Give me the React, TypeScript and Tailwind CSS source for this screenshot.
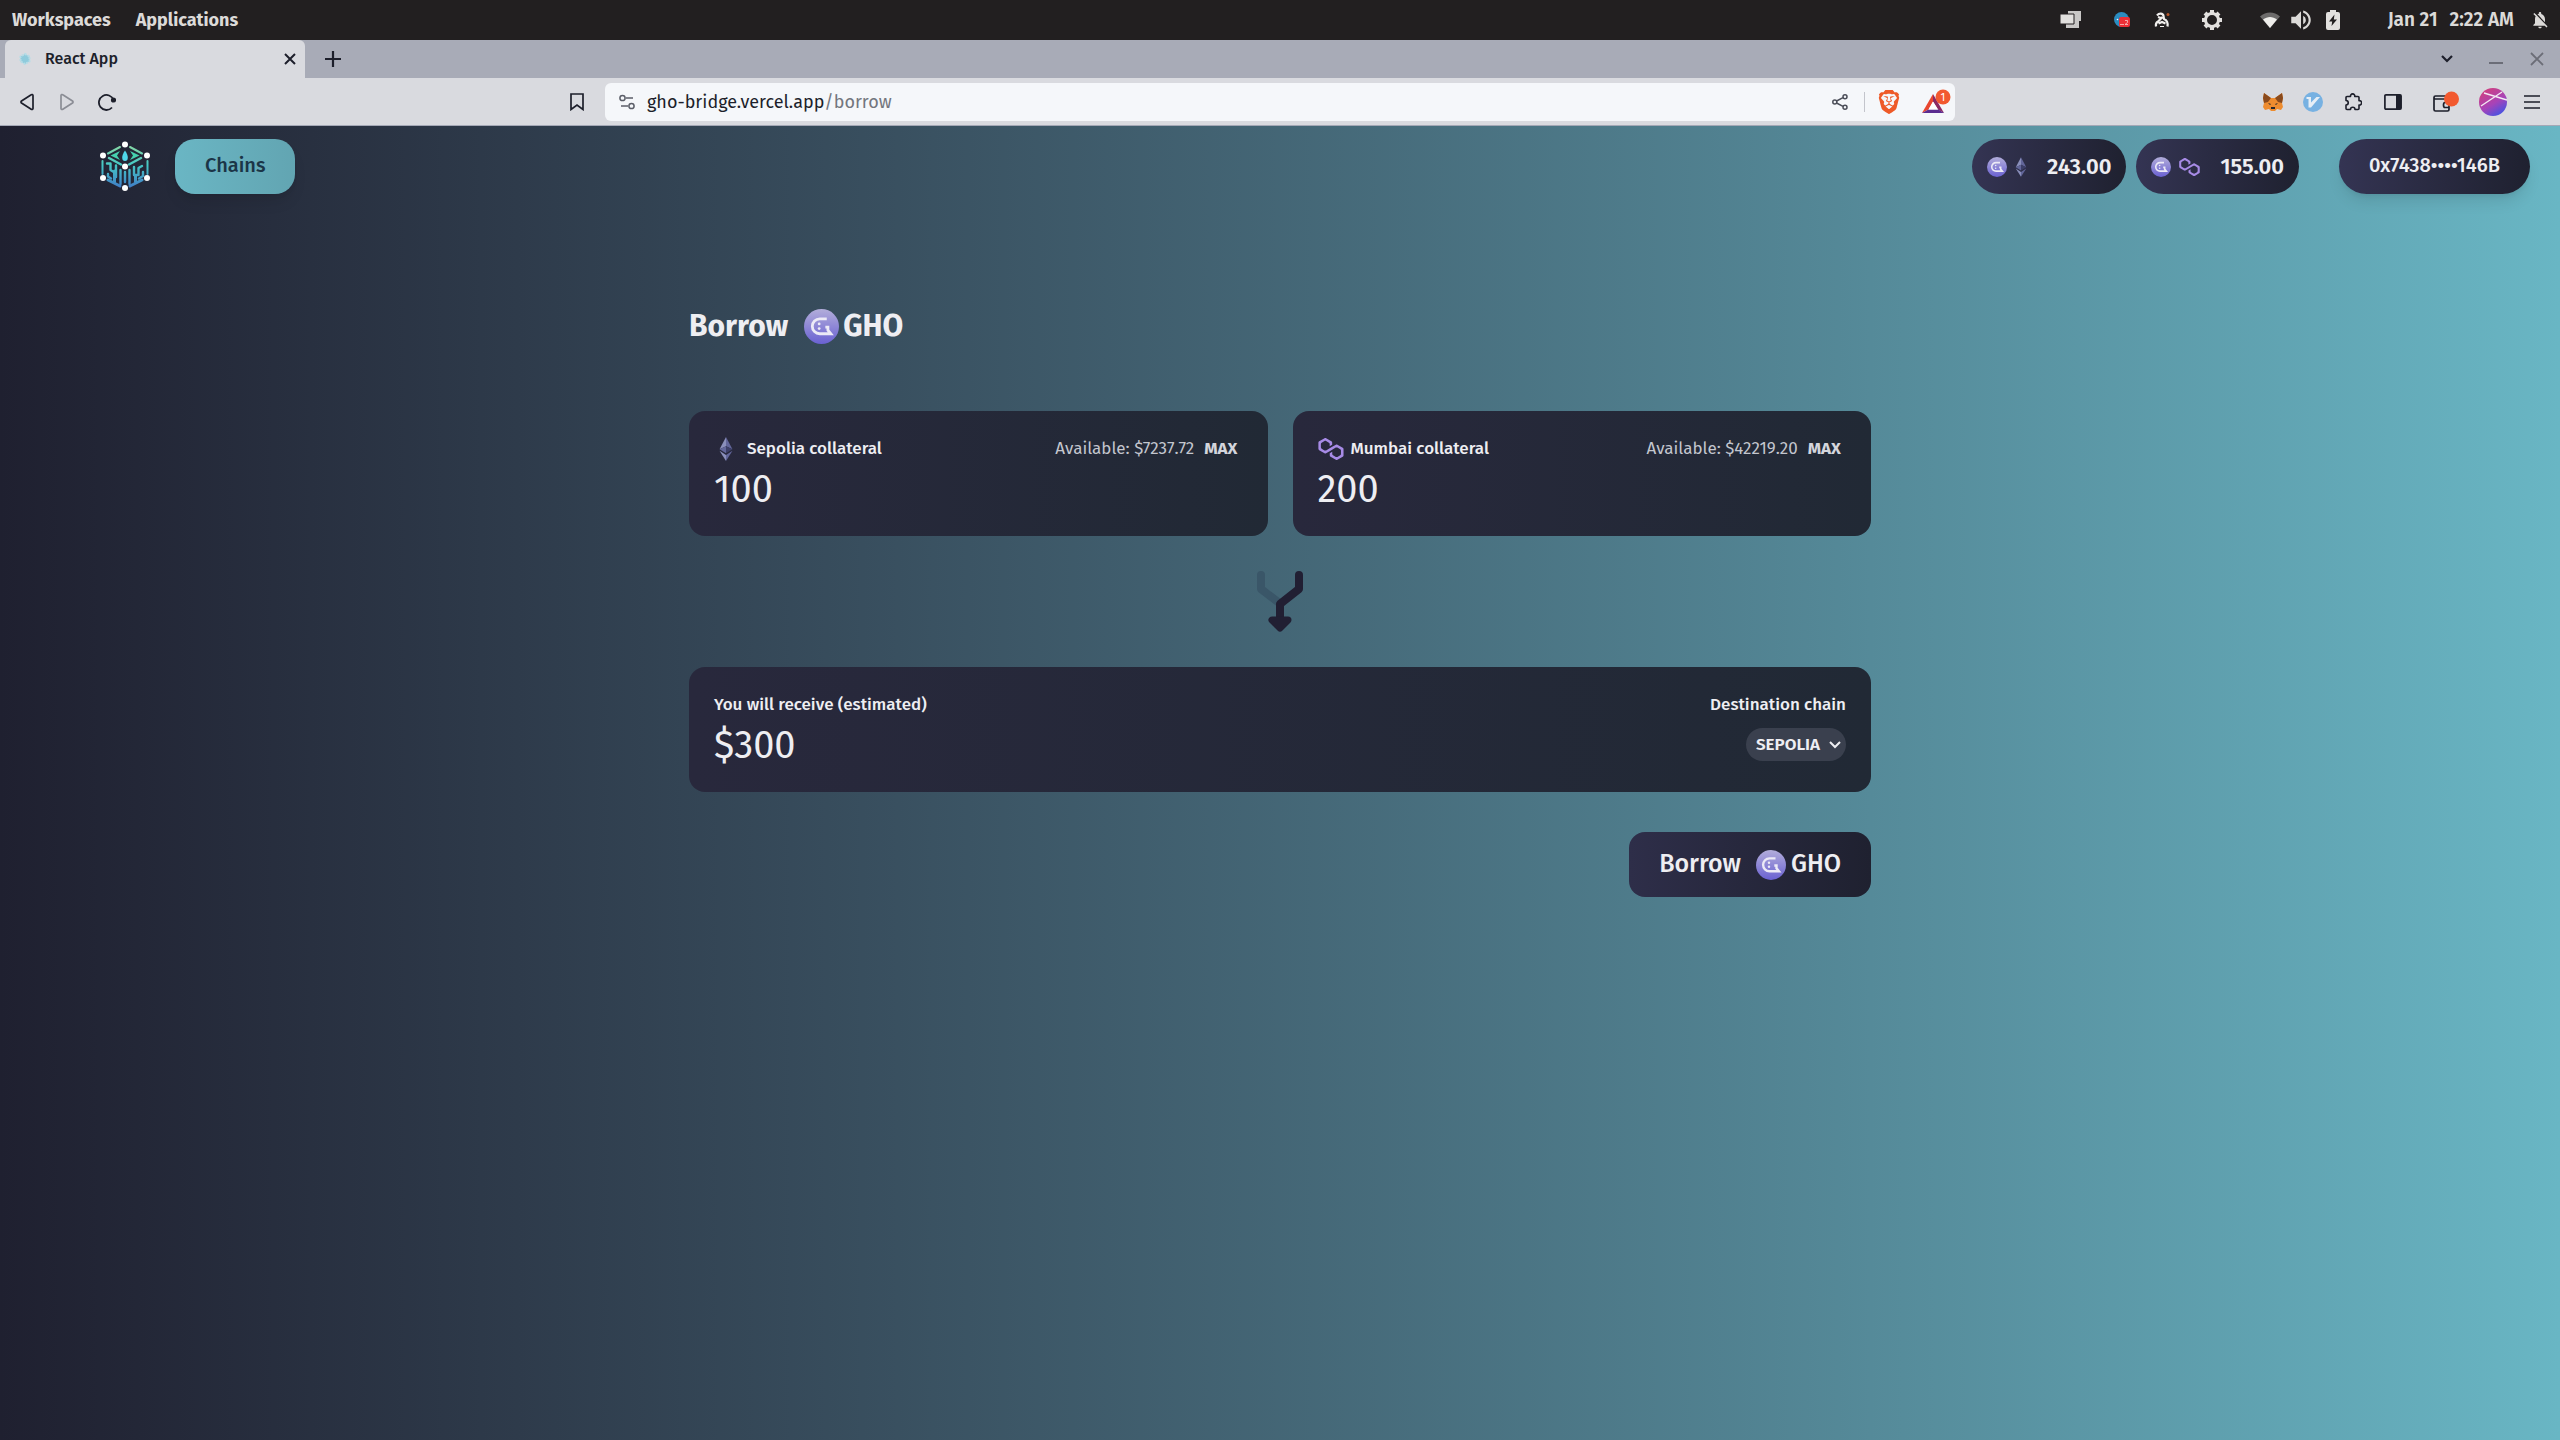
import { useState } from 'react';
import type { ReactNode } from 'react';
import { SiBrave } from 'react-icons/si';
import { MdNotificationsOff, MdVolumeUp } from 'react-icons/md';

const cards = [
  { id: 'sepolia', name: 'Sepolia', available: '$7237.72' },
  { id: 'mumbai', name: 'Mumbai', available: '$42219.20' },
];

const balances = [
  { id: 'sepolia', amount: '243.00' },
  { id: 'mumbai', amount: '155.00' },
];

/* Icons */
function GhoIcon({ className }: { className: string }) {
  return (
    <svg viewBox="0 0 30 30" className={className} aria-hidden="true">
      <defs>
        <linearGradient id="gho" x1="0" y1="0" x2="0" y2="1">
          <stop offset="0" stopColor="#b2adda" />
          <stop offset="1" stopColor="#6a61d2" />
        </linearGradient>
      </defs>
      <circle cx="15" cy="15" r="15" fill="url(#gho)" />
      <path d="M19.5 8.4h-6a6.4 6.4 0 0 0 0 12.8H23l-2.5-3v-2.7h-2.2" fill="none" stroke="#eceaf6" strokeWidth="2.4" />
      <circle cx="13" cy="12.8" r="1.2" fill="#eceaf6" />
      <circle cx="13" cy="16.8" r="1.2" fill="#eceaf6" />
    </svg>
  );
}

function EthIcon({ className }: { className: string }) {
  return (
    <svg viewBox="0 0 16 26" className={className} aria-hidden="true">
      <path d="M8 0 1 13.2 8 10z" fill="#8a8fbb" />
      <path d="M8 0v10l7 3.2z" fill="#62669a" />
      <path d="M1 13.2 8 17.5V10z" fill="#62669a" />
      <path d="M15 13.2 8 17.5V10z" fill="#3c3f68" />
      <path d="M1 15l7 4.5V26z" fill="#8a8fbb" />
      <path d="M15 15l-7 4.5V26z" fill="#62669a" />
    </svg>
  );
}

function PolygonIcon({ className }: { className: string }) {
  return (
    <svg viewBox="0 0 38.4 33.5" className={className} fill="#a78be6" aria-hidden="true">
      <path d="M29 10.2c-.7-.4-1.6-.4-2.4 0L21 13.5l-3.8 2.1-5.5 3.3c-.7.4-1.6.4-2.4 0L5 16.3c-.7-.4-1.2-1.2-1.2-2.1v-5c0-.8.4-1.6 1.2-2.1l4.3-2.5c.7-.4 1.6-.4 2.4 0L16 7.2c.7.4 1.2 1.2 1.2 2.1v3.3l3.8-2.2V7c0-.8-.4-1.6-1.2-2.1l-8-4.7c-.7-.4-1.6-.4-2.4 0L1.2 5C.4 5.4 0 6.2 0 7v9.4c0 .8.4 1.6 1.2 2.1l8.1 4.7c.7.4 1.6.4 2.4 0l5.5-3.2 3.8-2.2 5.5-3.2c.7-.4 1.6-.4 2.4 0l4.3 2.5c.7.4 1.2 1.2 1.2 2.1v5c0 .8-.4 1.6-1.2 2.1L29 28.8c-.7.4-1.6.4-2.4 0l-4.3-2.5c-.7-.4-1.2-1.2-1.2-2.1V21l-3.8 2.2v3.3c0 .8.4 1.6 1.2 2.1l8.1 4.7c.7.4 1.6.4 2.4 0l8.1-4.7c.7-.4 1.2-1.2 1.2-2.1V17c0-.8-.4-1.6-1.2-2.1z" />
    </svg>
  );
}

function Logo() {
  return (
    <svg viewBox="0 0 50 52" className="h-[52px] w-[50px]" role="img" aria-label="GHO Bridge">
      <defs>
        <linearGradient id="cube" gradientUnits="userSpaceOnUse" x1="0" y1="2" x2="0" y2="50">
          <stop offset="0" stopColor="#8fd9a0" />
          <stop offset=".45" stopColor="#45c8c4" />
          <stop offset="1" stopColor="#3f72c8" />
        </linearGradient>
      </defs>
      <g fill="none" stroke="url(#cube)" strokeWidth="2" strokeLinecap="round" strokeLinejoin="round">
        <path d="M20 6 8 12.5M30 6l12 6.5M2.5 20v13M47.5 20v13" />
        <path d="M9 17l12 6.5M41 17l-12 6.5" strokeWidth="2.5" />
        <path d="M20 45 8 39M30 45l12-6M14.5 30v11M35.5 35v6" strokeWidth="3" />
        <path d="M7 22.5h3.5V29l4 2.5M16 24.5V36M20.5 29v14M25 31v10M29.5 29v14M34 26v8h4.5v-7l3.5-2M43 31v4l-4 2.5M8 33v2.5l3 2" strokeWidth="2.4" />
      </g>
      <path d="M10.5 14.5 20 10l-3 4.5 3 4.5zM39.5 14.5 30 10l3 4.5-3 4.5z" fill="#45d0ae" />
      <path d="M25 9.5c4 5.5 3.5 10.5 0 10.5s-4-5 0-10.5z" fill="#4fd6ea" />
      <g fill="#fff">
        <circle cx="25" cy="3.5" r="3" />
        <circle cx="3" cy="14.5" r="3" />
        <circle cx="47" cy="14.5" r="3" />
        <circle cx="25" cy="25.5" r="3" />
        <circle cx="3" cy="37" r="3" />
        <circle cx="47" cy="37" r="3" />
        <circle cx="25" cy="47" r="3" />
      </g>
    </svg>
  );
}

function MergeArrow() {
  return (
    <svg viewBox="0 0 46 62" className="h-[62px] w-[46px]" fill="none" strokeLinecap="round" strokeLinejoin="round" aria-hidden="true">
      <path d="M4 5v14l17 13" stroke="#3a5668" strokeWidth="8" />
      <path d="M42 5v14L23 34v14" stroke="#211f33" strokeWidth="8" />
      <path d="M15 50h16l-8 8z" fill="#211f33" stroke="#211f33" strokeWidth="7" />
    </svg>
  );
}

function IconButton({ label, children }: { label: string; children: ReactNode }) {
  return (
    <button aria-label={label} className="flex w-10 shrink-0 items-center justify-center">
      {children}
    </button>
  );
}

/* Desktop panel */
function SystemBar() {
  return (
    <div className="flex h-10 items-center justify-between bg-[#221f20] pl-3 pr-[10px] text-[#dcdad8]">
      <div className="flex gap-[25px] text-lg font-bold">
        <button>Workspaces</button>
        <button>Applications</button>
      </div>
      <div className="flex items-center text-[19px] font-semibold">
        <svg viewBox="0 0 22 18" className="mr-8 h-[18px] w-[22px]" aria-hidden="true">
          <path d="M8 0h13v10H8zM6 9h13v8H6z" fill="#c9c7c6" />
          <path d="M0 3h14v10H0z" fill="#e2e0de" stroke="#221f20" />
        </svg>
        <svg viewBox="0 0 16 16" className="mr-6 h-4 w-4" aria-hidden="true">
          <circle cx="7.5" cy="7.5" r="7.5" fill="#2b8cc0" />
          <rect x="5" y="5" width="11" height="10" rx="2" fill="#ea2f36" />
          <path d="M6 12.5h4M11 8.5h2.5v2L11 12.5h3" stroke="#f8c9c9" fill="none" strokeWidth=".8" />
          <circle cx="3.5" cy="7.5" r=".8" fill="#fff" />
        </svg>
        <svg viewBox="0 0 16 16" className="mr-8 h-4 w-4" aria-hidden="true">
          <path
            d="M3 3.5C5 1 9 1 9.5 4l.5 3c2.5 1 4 4 3.5 7.5M8.5 5 4 9.5c-2 1-2.5 2.5-2 5M4 5l3 1M4.500 11.500 8 10l3.500 1.500"
            fill="none"
            stroke="#f1efed"
            strokeWidth="2.2"
          />
          <path d="M6 14.5h4" stroke="#f1efed" />
          <circle cx="14" cy="2.5" r="1.5" fill="#b4552a" />
        </svg>
        <svg viewBox="0 0 20 20" className="mr-[38px] h-5 w-5" aria-hidden="true">
          <circle cx="10" cy="10" r="6.5" fill="none" stroke="#e2e0de" strokeWidth="3" />
          <path
            d="M10 0v3M10 17v3M0 10h3M17 10h3M3 3l2 2M15 15l2 2M17 3l-2 2M5 15l-2 2"
            stroke="#e2e0de"
            strokeWidth="4"
          />
        </svg>
        <svg viewBox="0 0 20 16" className="mr-2 h-4 w-5" aria-hidden="true">
          <path d="M0 4.5C6-.8 14-.8 20 4.5L10 16z" fill="#6d6b6b" />
          <path d="M3 7.5c4.5-3.5 9.5-3.5 14 0L10 16z" fill="#efedeb" />
        </svg>
        <MdVolumeUp className="mr-3 h-[26px] w-[26px]" />
        <svg viewBox="0 0 14 20" className="mr-12 h-5 w-[14px]" aria-hidden="true">
          <path d="M4 2V0h6v2h2a2 2 0 0 1 2 2v14a2 2 0 0 1-2 2H2a2 2 0 0 1-2-2V4a2 2 0 0 1 2-2z" fill="#e2e0de" />
          <path d="M8.5 4.500 3 11.5h3.2L5.5 16 11 9.5H7.8z" fill="#221f20" />
        </svg>
        <span className="mr-3">Jan 21</span>
        <span className="mr-4">2:22 AM</span>
        <MdNotificationsOff className="h-5 w-5" />
      </div>
    </div>
  );
}

function TabStrip() {
  return (
    <div className="flex h-[38px] items-center justify-between bg-[#a8abb7] pl-[5px] pr-[3px]">
      <div className="flex h-full items-center">
        <div className="flex h-full w-[300px] items-center rounded-t-md bg-[#d9dadf] pl-3 pr-2 text-base font-medium text-[#1d1f2b]">
          <svg viewBox="0 0 16 16" className="mr-3 h-4 w-4" aria-hidden="true">
            <path d="M8 3l4.5 2.5v5L8 13l-4.5-2.5v-5z" fill="#8fcbdc" stroke="#b7dce6" strokeWidth="2" strokeDasharray="2 1" />
          </svg>
          <span className="flex-1">React App</span>
          <button aria-label="Close tab">
            <svg viewBox="0 0 14 14" className="h-[14px] w-[14px]" stroke="#1d1f2b" strokeWidth="2">
              <path d="M2 2l10 10M12 2 2 12" />
            </svg>
          </button>
        </div>
        <button aria-label="New tab" className="ml-5">
          <svg viewBox="0 0 16 16" className="h-4 w-4" stroke="#1d1f2b" strokeWidth="2.2">
            <path d="M8 0v16M0 8h16" />
          </svg>
        </button>
      </div>
      <div className="flex items-center">
        <button aria-label="Search tabs" className="mr-6">
          <svg viewBox="0 0 12 8" className="h-2 w-3" fill="none" stroke="#1d1f2b" strokeWidth="2.2">
            <path d="M1 1l5 5 5-5" />
          </svg>
        </button>
        <button aria-label="Minimize" className="w-10 px-3 pt-2">
          <svg viewBox="0 0 14 2" className="h-[2px] w-[14px]">
            <path d="M0 1h14" stroke="#6b6d77" strokeWidth="2" />
          </svg>
        </button>
        <button aria-label="Close window" className="flex w-10 justify-center">
          <svg viewBox="0 0 14 14" className="h-[14px] w-[14px]" stroke="#6b6d77" strokeWidth="1.8">
            <path d="M1 1l12 12M13 1 1 13" />
          </svg>
        </button>
      </div>
    </div>
  );
}

function Toolbar() {
  return (
    <div className="grid h-12 grid-cols-[1fr_minmax(0,1350px)_1fr] items-center border-b border-[#a4a8b6] bg-[#d9dadf]">
      <div className="flex items-center justify-between pl-[7px] pr-2">
        <div className="flex">
          <IconButton label="Back">
            <svg viewBox="0 0 14 18" className="h-[18px] w-[14px]" fill="none" stroke="#1d1f2b" strokeWidth="1.7" strokeLinejoin="round">
              <path d="M13 2.5v13c0 1-1 1.3-1.8.7L1.5 10c-.7-.6-.7-1.4 0-2l9.7-6.2C12 1.2 13 1.5 13 2.5z" />
            </svg>
          </IconButton>
          <IconButton label="Forward">
            <svg viewBox="0 0 14 18" className="h-[18px] w-[14px]" fill="none" stroke="#8b8d95" strokeWidth="1.7" strokeLinejoin="round">
              <path d="M1 2.5v13c0 1 1 1.3 1.8.7l9.7-6.2c.7-.6.7-1.4 0-2L2.8 1.800C2 1.200 1 1.500 1 2.500z" />
            </svg>
          </IconButton>
          <IconButton label="Reload">
            <svg viewBox="0 0 18 18" className="h-[18px] w-[18px]" fill="none" stroke="#1d1f2b" strokeWidth="1.8">
              <path d="M14 14.5A7.5 7.5 0 1 1 15.5 7" />
              <circle cx="15.5" cy="7" r="1.7" fill="#1d1f2b" />
            </svg>
          </IconButton>
        </div>
        <IconButton label="Bookmark this tab">
          <svg viewBox="0 0 14 18" className="h-[18px] w-[14px]" fill="none" stroke="#1d1f2b" strokeWidth="1.7">
            <path d="M1 1h12v15.5L7 12l-6 4.500z" />
          </svg>
        </IconButton>
      </div>

      {/* Address bar */}
      <div className="flex h-[38px] items-center rounded-md bg-[#f5f7fa] pl-[14px] pr-1 text-lg">
        <svg viewBox="0 0 16 16" className="mr-3 h-4 w-4" fill="none" stroke="#5b5e68" strokeWidth="1.5" aria-hidden="true">
          <circle cx="3.5" cy="4" r="2.6" />
          <circle cx="12.5" cy="12" r="2.6" />
          <path d="M7 4h7M2 12h7" />
        </svg>
        <a href="/borrow" className="flex-1 text-[#1d1f2b]">
          gho-bridge.vercel.app<span className="text-[#73767e]">/borrow</span>
        </a>
        <button aria-label="Share" className="mr-4">
          <svg viewBox="0 0 16 16" className="h-4 w-4" fill="none" stroke="#4b4e58" strokeWidth="1.5">
            <circle cx="2.8" cy="8" r="2" />
            <circle cx="13" cy="2.8" r="2" />
            <circle cx="13" cy="13.2" r="2" />
            <path d="M4.6 7 11 3.7M4.6 9l6.4 3.3" />
          </svg>
        </button>
        <span className="mr-3 h-5 border-l border-[#c3c5cc]" />
        <button aria-label="Brave Shields" className="mr-5">
          <SiBrave className="h-6 w-6 text-[#ee5a28]" />
        </button>
        <button aria-label="Brave Rewards">
          <svg viewBox="0 0 30 26" className="h-[26px] w-[30px]">
            <path d="M1 24 12 5v7.5l-4.5 8z" fill="#e8462f" />
            <path d="M12 5l11 19-6-3.5-5-8z" fill="#8d2a63" />
            <path d="M1 24l6.5-3.5h10L23 24z" fill="#5b2d90" />
            <path d="M12 12.5l-4.5 8h9.5z" fill="#fff" />
            <circle cx="22" cy="8" r="7.5" fill="#f2592f" />
            <text x="22" y="12" textAnchor="middle" fontSize="11" fill="#fff">1</text>
          </svg>
        </button>
      </div>

      <div className="flex items-center justify-end pr-2">
        <IconButton label="MetaMask">
          <svg viewBox="0 0 20 18" className="h-[18px] w-5">
            <path d="M1 0l7 5h4l7-5 1 5-1 5 1 4-2 3-4-1-2 2H8l-2-2-4 1-2-3 1-4-1-5z" fill="#ee8c2f" />
            <path d="M1 0l7 5-3 4-4 1-1-5zM19 0l-7 5 3 4 4 1 1-5z" fill="#8a4a1d" />
            <path d="M5 10l3 1-1 1zM15 10l-3 1 1 1zM8 14h4v2H8z" fill="#23262f" />
          </svg>
        </IconButton>
        <IconButton label="Vimium">
          <svg viewBox="0 0 20 20" className="h-5 w-5">
            <circle cx="10" cy="10" r="10" fill="#77b1e2" />
            <path d="M3.5 5H8v5.5L13.5 5H17L8 15.5H5.5V7h-2z" fill="#e6eef6" />
          </svg>
        </IconButton>
        <IconButton label="Extensions">
          <svg viewBox="0 0 18 18" className="h-[18px] w-[18px]" fill="none" stroke="#1d1f2b" strokeWidth="1.6" strokeLinejoin="round">
            <path d="M3 3.5h3.5a2.2 2.2 0 1 1 4.3 0H14a1 1 0 0 1 1 1v3.2a2.2 2.2 0 1 1 0 4.3v3.5a1 1 0 0 1-1 1h-3c0-3-4.5-3-4.5 0H3a1 1 0 0 1-1-1V12c3-.2 3-4.3 0-4.5v-3a1 1 0 0 1 1-1z" />
          </svg>
        </IconButton>
        <IconButton label="Sidebar">
          <svg viewBox="0 0 18 16" className="h-4 w-[18px]">
            <rect x=".9" y=".9" width="16.2" height="14.2" rx="1" fill="none" stroke="#1d1f2b" strokeWidth="1.7" />
            <path d="M12 1h5v14h-5z" fill="#1d1f2b" />
          </svg>
        </IconButton>
        <button aria-label="Wallet" className="mx-5 shrink-0">
          <svg viewBox="0 0 26 22" className="h-[22px] w-[26px]" fill="none" stroke="#1d1f2b" strokeWidth="1.7">
            <path d="M1 6.5v12c0 .8.6 1.5 1.5 1.5h12c1 0 1.5-.7 1.5-1.5v-9c0-.8-.5-1.5-1.5-1.5h-12C.5 8 .5 5 2.5 5H14M16 11.5h-4c-2 0-2 5 0 5h4" />
            <circle cx="18.5" cy="8" r="7.5" fill="#f2592f" stroke="none" />
          </svg>
        </button>
        <button aria-label="Profile" className="mr-[5px] shrink-0">
          <svg viewBox="0 0 28 28" className="h-7 w-7">
            <defs>
              <linearGradient id="avatar" x1=".2" y1="0" x2=".8" y2="1">
                <stop offset="0" stopColor="#d23f7c" />
                <stop offset=".55" stopColor="#a743b8" />
                <stop offset="1" stopColor="#3a55e8" />
              </linearGradient>
            </defs>
            <circle cx="14" cy="14" r="14" fill="url(#avatar)" />
            <path d="M2 18 23 4M5 5l23 7" stroke="#f4e9f4" strokeWidth="1.4" />
          </svg>
        </button>
        <IconButton label="Menu">
          <svg viewBox="0 0 18 14" className="h-[14px] w-[18px]" stroke="#1d1f2b" strokeWidth="1.6">
            <path d="M1 1h16M1 7h16M1 13h16" />
          </svg>
        </IconButton>
      </div>
    </div>
  );
}

function Header() {
  return (
    <header className="flex items-center justify-between pl-[100px] pr-[30px] pt-[13px]">
      <div className="flex items-center gap-[25px]">
        <Logo />
        <button className="h-[55px] rounded-[20px] bg-linear-to-r from-[#6ab6c4] to-[#62a5b2] px-[30px] pb-1 text-xl font-medium text-[#1b3547] shadow-lg">
          Chains
        </button>
      </div>
      <div className="flex items-center gap-10 text-[#eeeef2]">
        <div className="flex gap-[10px]">
          {balances.map((balance) => (
            <div
              key={balance.id}
              className="flex h-[55px] items-center rounded-full bg-linear-to-r from-[#343453] to-[#1f2130] px-[15px]"
            >
              <GhoIcon className="mr-2 h-5 w-5" />
              {balance.id === 'sepolia' ? <EthIcon className="h-5 w-3" /> : <PolygonIcon className="h-[18px] w-[21px]" />}
              <span className="ml-5 text-[22px] font-semibold">{balance.amount}</span>
            </div>
          ))}
        </div>
        <button className="h-[55px] rounded-full bg-linear-to-r from-[#343453] to-[#1f2130] px-[30px] pb-1 text-xl font-medium shadow-lg">
          0x7438••••146B
        </button>
      </div>
    </header>
  );
}

export default function App() {
  const [amounts, setAmounts] = useState<Record<string, string>>({ sepolia: '100', mumbai: '200' });
  const [destination, setDestination] = useState('SEPOLIA');

  const total = Object.values(amounts).reduce((sum, value) => sum + (Number(value) || 0), 0);

  return (
    <div className="flex min-h-screen flex-col font-['Fira_Sans',Roboto,sans-serif]">
      <SystemBar />
      <TabStrip />
      <Toolbar />

      <div className="flex-1 bg-linear-to-r from-[#1f2030] to-[#69b6c4]">
        <Header />

        <main className="mx-auto mt-[110px] flex max-w-[1182px] flex-col text-[#eeeef2]">
          <h1 className="flex items-center text-3xl font-bold leading-[45px]">
            Borrow
            <GhoIcon className="ml-4 mr-1 h-[35px] w-[35px]" />
            GHO
          </h1>

          {/* Collateral inputs */}
          <div className="mt-[62px] grid grid-cols-2 gap-[25px]">
            {cards.map((card) => (
              <div
                key={card.id}
                className="h-[125px] rounded-2xl bg-linear-to-r from-[#28283c] to-[#212935] px-[25px] pt-[26px]"
              >
                <div className="flex h-6 items-center text-[17px]">
                  <span className="flex w-[33px] shrink-0">
                    {card.id === 'sepolia' ? (
                      <EthIcon className="ml-1 h-6 w-4" />
                    ) : (
                      <PolygonIcon className="h-[22px] w-[26px]" />
                    )}
                  </span>
                  <label htmlFor={card.id} className="flex-1 font-medium">
                    {card.name} collateral
                  </label>
                  <span className="text-[#c3c6ce]">Available: {card.available}</span>
                  <button
                    className="ml-[10px] mr-[5px] font-bold text-[#d3d5dc]"
                    onClick={() => setAmounts({ ...amounts, [card.id]: card.available.slice(1) })}
                  >
                    MAX
                  </button>
                </div>
                <input
                  id={card.id}
                  type="text"
                  inputMode="decimal"
                  value={amounts[card.id]}
                  onChange={(e) => setAmounts({ ...amounts, [card.id]: e.target.value })}
                  className="mt-1 h-12 w-full bg-transparent text-[38px] outline-none"
                />
              </div>
            ))}
          </div>

          <div className="mt-[34px] flex justify-center">
            <MergeArrow />
          </div>

          {/* Estimated output */}
          <div className="mt-[35px] flex h-[125px] justify-between rounded-2xl bg-linear-to-r from-[#28283c] to-[#212935] px-[25px] pt-[26px] text-[17px] font-medium">
            <div>
              <p className="leading-6">You will receive (estimated)</p>
              <p className="mt-1 text-[38px] font-normal leading-[48px]">${total}</p>
            </div>
            <div className="flex flex-col items-end">
              <label htmlFor="destination" className="leading-6">
                Destination chain
              </label>
              <div className="relative mt-[11px]">
                <select
                  id="destination"
                  value={destination}
                  onChange={(e) => setDestination(e.target.value)}
                  className="h-[33px] appearance-none rounded-full bg-[#3a404e] pl-[10px] pr-[25px] text-[17px] font-semibold outline-none"
                >
                  <option>SEPOLIA</option>
                  <option>MUMBAI</option>
                </select>
                <svg
                  viewBox="0 0 12 8"
                  className="pointer-events-none absolute right-[5px] top-[13px] h-2 w-3"
                  fill="none"
                  stroke="#eeeef2"
                  strokeWidth="2"
                >
                  <path d="M1 1l5 5 5-5" />
                </svg>
              </div>
            </div>
          </div>

          <button className="mt-10 flex h-[65px] items-center self-end rounded-2xl bg-linear-to-r from-[#2e2e49] to-[#1f2130] px-[30px] text-[25px] font-medium">
            Borrow
            <GhoIcon className="ml-[15px] mr-[5px] h-[30px] w-[30px]" />
            GHO
          </button>
        </main>
      </div>
    </div>
  );
}
